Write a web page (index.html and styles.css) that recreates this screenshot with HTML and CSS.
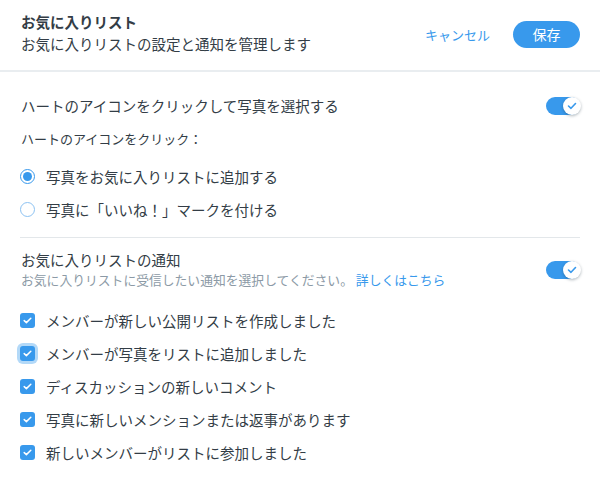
FILE: index.html
```html
<!DOCTYPE html>
<html lang="ja">
<head>
    <meta charset="UTF-8">
    <meta name="viewport" content="width=device-width, initial-scale=1.0">
    <title>お気に入りリスト</title>
    <link rel="stylesheet" href="styles.css">
</head>
<body>
    <div class="header">
        <div class="header-text">
            <h1>お気に入りリスト</h1>
            <p>お気に入りリストの設定と通知を管理します</p>
        </div>
        <div class="actions">
            <a class="cancel" href="#">キャンセル</a>
            <button class="save">保存</button>
        </div>
    </div>

    <div class="content">
        <div class="row">
            <span class="row-title">ハートのアイコンをクリックして写真を選択する</span>
            <span class="toggle"><span class="knob"><svg width="10" height="8" viewBox="0 0 10 8"><path d="M1.5 4l2.5 2.3L8.5 1.5" fill="none" stroke="#3899ec" stroke-width="1.6" stroke-linecap="round" stroke-linejoin="round"/></svg></span></span>
        </div>

        <div class="label">ハートのアイコンをクリック：</div>

        <div class="options">
            <label class="option"><span class="radio checked"></span>写真をお気に入りリストに追加する</label>
            <label class="option"><span class="radio"></span>写真に「いいね！」マークを付ける</label>
        </div>

        <hr class="divider">

        <div class="row notif">
            <div>
                <div class="row-title">お気に入りリストの通知</div>
                <div class="hint">お気に入りリストに受信したい通知を選択してください。 <a href="#">詳しくはこちら</a></div>
            </div>
            <span class="toggle"><span class="knob"><svg width="10" height="8" viewBox="0 0 10 8"><path d="M1.5 4l2.5 2.3L8.5 1.5" fill="none" stroke="#3899ec" stroke-width="1.6" stroke-linecap="round" stroke-linejoin="round"/></svg></span></span>
        </div>

        <div class="checks">
            <label class="option"><span class="checkbox"><svg width="9" height="7" viewBox="0 0 9 7"><path d="M1.2 3.6l2.2 2 4.4-4.4" fill="none" stroke="#fff" stroke-width="1.5" stroke-linecap="round" stroke-linejoin="round"/></svg></span>メンバーが新しい公開リストを作成しました</label>
            <label class="option"><span class="checkbox focus"><svg width="9" height="7" viewBox="0 0 9 7"><path d="M1.2 3.6l2.2 2 4.4-4.4" fill="none" stroke="#fff" stroke-width="1.5" stroke-linecap="round" stroke-linejoin="round"/></svg></span>メンバーが写真をリストに追加しました</label>
            <label class="option"><span class="checkbox"><svg width="9" height="7" viewBox="0 0 9 7"><path d="M1.2 3.6l2.2 2 4.4-4.4" fill="none" stroke="#fff" stroke-width="1.5" stroke-linecap="round" stroke-linejoin="round"/></svg></span>ディスカッションの新しいコメント</label>
            <label class="option"><span class="checkbox"><svg width="9" height="7" viewBox="0 0 9 7"><path d="M1.2 3.6l2.2 2 4.4-4.4" fill="none" stroke="#fff" stroke-width="1.5" stroke-linecap="round" stroke-linejoin="round"/></svg></span>写真に新しいメンションまたは返事があります</label>
            <label class="option"><span class="checkbox"><svg width="9" height="7" viewBox="0 0 9 7"><path d="M1.2 3.6l2.2 2 4.4-4.4" fill="none" stroke="#fff" stroke-width="1.5" stroke-linecap="round" stroke-linejoin="round"/></svg></span>新しいメンバーがリストに参加しました</label>
        </div>
    </div>
</body>
</html>
```

FILE: styles.css
```css
body {
    margin: 0;
    font-family: "Noto Sans CJK JP", "Noto Sans", sans-serif;
    color: #333d46;
    background: #fff;
}

.header {
    height: 72px;
    box-sizing: border-box;
    display: flex;
    align-items: center;
    justify-content: space-between;
    padding: 0 20px 4px 21px;
    border-bottom: 2px solid #e9edf0;
}

.header h1 {
    margin: 0;
    font-size: 14.5px;
    line-height: 22px;
    font-weight: 700;
}

.header p {
    margin: 0;
    font-size: 14.5px;
    line-height: 22px;
}

.actions {
    display: flex;
    align-items: center;
    gap: 23px;
    padding-top: 2px;
}

.cancel {
    color: #3899ec;
    font-size: 13px;
    text-decoration: none;
}

.save {
    width: 67px;
    height: 27px;
    border: none;
    border-radius: 14px;
    background: #3899ec;
    color: #fff;
    font-family: inherit;
    font-size: 14px;
    padding: 0;
}

.content {
    padding: 17px 20px 0 21px;
}

.row {
    display: flex;
    align-items: center;
    justify-content: space-between;
    min-height: 34px;
}

.row-title {
    font-size: 14.5px;
    line-height: 20px;
}

.toggle {
    position: relative;
    width: 34px;
    height: 18px;
    border-radius: 9px;
    background: #3899ec;
    flex-shrink: 0;
}

.knob {
    position: absolute;
    right: -1px;
    top: 0;
    width: 18px;
    height: 18px;
    border-radius: 50%;
    background: #fff;
    box-shadow: 0 1px 3px rgba(22, 45, 61, 0.35);
    display: flex;
    align-items: center;
    justify-content: center;
}

.label {
    margin-top: 6px;
    font-size: 13px;
    line-height: 20px;
}

.options {
    margin-top: 11px;
}

.option {
    display: flex;
    align-items: center;
    height: 33px;
    font-size: 14.5px;
    gap: 11px;
}

.radio {
    width: 15px;
    height: 15px;
    box-sizing: border-box;
    border: 1px solid #8cc2f2;
    border-radius: 50%;
    display: flex;
    align-items: center;
    justify-content: center;
    margin-left: -1px;
}

.radio.checked {
    border-color: #3899ec;
}

.radio.checked::after {
    content: "";
    width: 9px;
    height: 9px;
    border-radius: 50%;
    background: #3899ec;
}

.divider {
    border: none;
    border-top: 1px solid #e3e7ea;
    margin: 11px 0 12px -1px;
}

.notif .hint {
    font-size: 12.8px;
    line-height: 20px;
    color: #8c9aa6;
}

.hint a {
    color: #3899ec;
    text-decoration: none;
}

.checks {
    margin-top: 14px;
}

.checkbox {
    width: 15px;
    height: 15px;
    border-radius: 3px;
    background: #3899ec;
    display: flex;
    align-items: center;
    justify-content: center;
    margin-left: -1px;
}

.checkbox.focus {
    box-shadow: 0 0 0 3px #b3d9f8;
}
```
